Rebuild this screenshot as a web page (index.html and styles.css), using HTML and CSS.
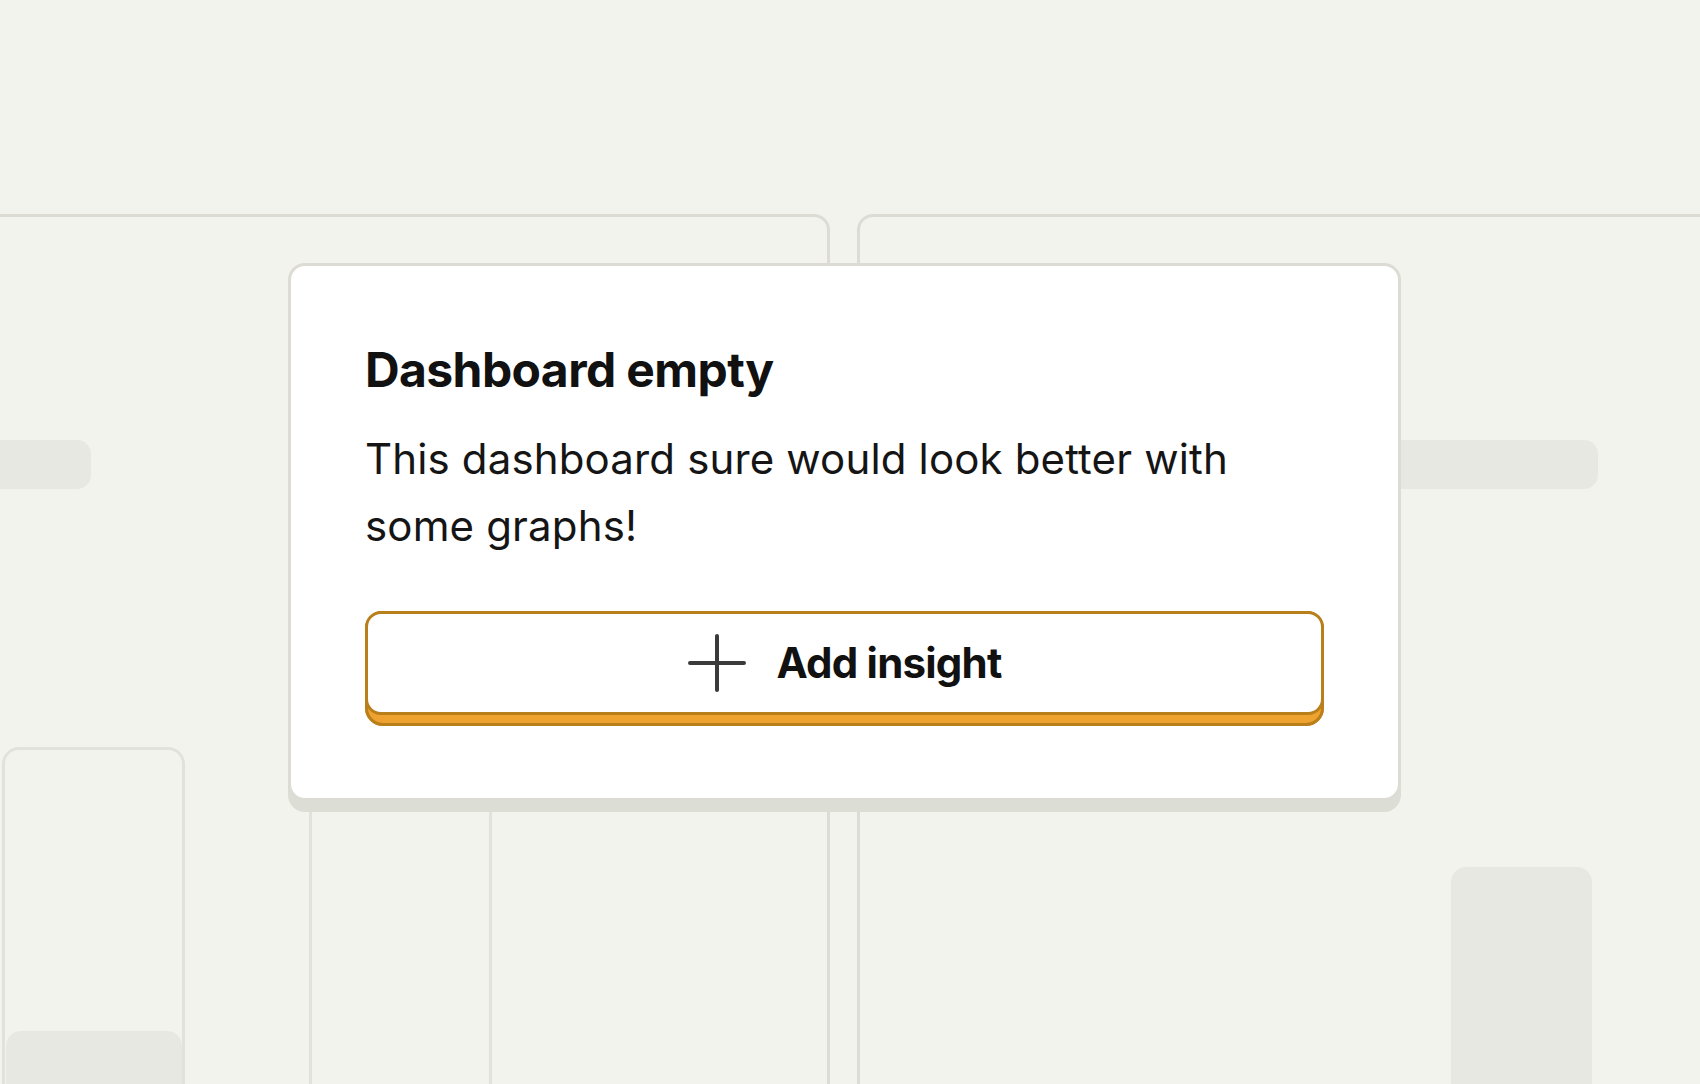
FILE: index.html
```html
<!DOCTYPE html>
<html lang="en">
<head>
<meta charset="utf-8">
<title>Dashboard empty</title>
<link rel="stylesheet" href="styles.css">
</head>
<body>
<div class="dashboard">
  <section class="panel panel-left">
    <div class="skel-bar skel-bar-left"></div>
    <div class="chart">
      <div class="column column-one"><div class="column-fill"></div></div>
      <div class="column column-two"></div>
    </div>
  </section>
  <section class="panel panel-right">
    <div class="skel-bar skel-bar-right"></div>
    <div class="skel-block"></div>
  </section>
</div>

<div class="empty-card">
  <h2 class="empty-title">Dashboard empty</h2>
  <p class="empty-text">This dashboard sure would look better with some graphs!</p>
  <button class="btn" type="button">
    <span class="btn-face">
      <svg class="btn-icon" viewBox="0 0 58 58" width="58" height="58" aria-hidden="true">
        <path d="M29 2V56M2 29H56" fill="none" stroke="#3a3a3a" stroke-width="4" stroke-linecap="round"/>
      </svg>
      <span class="btn-label">Add insight</span>
    </span>
  </button>
</div>
</body>
</html>
```

FILE: styles.css
```css
* { box-sizing: border-box; }

html, body {
  margin: 0;
  padding: 0;
  width: 1700px;
  height: 1084px;
  overflow: hidden;
  background: #f3f3ee;
  font-family: Inter, "Noto Sans", sans-serif;
  color: #141414;
}

.dashboard {
  display: grid;
  grid-template-columns: 860px 900px;
  column-gap: 27px;
  margin-left: -30px;
  padding-top: 214px;
  height: 1084px;
}

.panel {
  border: 3px solid #dcdcd4;
  border-bottom: none;
  border-radius: 16px 16px 0 0;
  background: #f3f3ee;
  display: flex;
  flex-direction: column;
  align-items: flex-start;
}

.skel-bar {
  height: 49px;
  border-radius: 14px;
  background: #e8e8e3;
  margin-top: 223px;
}

.skel-bar-left {
  width: 111px;
  margin-left: 7px;
}

.skel-bar-right {
  width: 400px;
  margin-left: 338px;
}

.chart {
  display: flex;
  align-items: flex-start;
  gap: 124px;
  margin-left: 29px;
  flex: 1;
}

.column {
  width: 183px;
  border: 3px solid #e2e2dc;
  border-bottom: none;
  border-radius: 17px 17px 0 0;
  display: flex;
  flex-direction: column;
  justify-content: flex-end;
}

.column-one {
  margin-top: 258px;
  height: 340px;
}

.column-two {
  margin-top: 200px;
  height: 400px;
}

.column-fill {
  height: 56px;
  margin: 0 0 0 1px;
  width: 176px;
  border-radius: 15px 15px 0 0;
  background: #e8e8e3;
}

.skel-block {
  width: 141px;
  height: 260px;
  margin-top: 378px;
  margin-left: 591px;
  border-radius: 15px 15px 0 0;
  background: #e8e8e3;
}

/* overlay card */
.empty-card {
  position: absolute;
  left: 288px;
  top: 263px;
  width: 1113px;
  padding: 75px 74px 72px;
  background: #ffffff;
  border: 3px solid #dcdcd4;
  border-radius: 17px;
  box-shadow: 0 11px 0 #dcddd5;
}

.empty-title {
  margin: 0;
  font-size: 48px;
  line-height: 58px;
  font-weight: 700;
  letter-spacing: -0.6px;
  color: #111111;
}

.empty-text {
  margin: 26px 0 0;
  font-size: 42px;
  line-height: 67px;
  font-weight: 400;
  letter-spacing: 0.15px;
  color: #151515;
}

.btn {
  display: block;
  width: 100%;
  margin-top: 52px;
  padding: 0 0 11px;
  border: none;
  border-radius: 18px;
  background: #eea22f;
  box-shadow: inset 0 0 0 3px #b97f1b;
  font: inherit;
  cursor: pointer;
}

.btn-face {
  display: flex;
  align-items: center;
  justify-content: center;
  gap: 31px;
  height: 104px;
  background: #ffffff;
  border: 3px solid #b97f1b;
  border-radius: 16px;
}

.btn-icon {
  display: block;
  width: 58px;
  height: 58px;
}

.btn-label {
  font-size: 42px;
  font-weight: 700;
  line-height: 1;
  color: #111111;
  letter-spacing: -0.8px;
}
```
